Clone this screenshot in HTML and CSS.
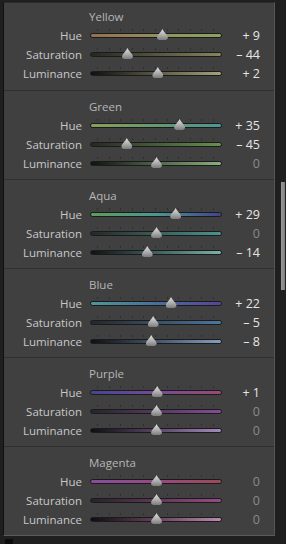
FILE: index.html
```html
<!DOCTYPE html>
<html lang="en">
<head>
    <meta charset="UTF-8">
    <meta name="viewport" content="width=device-width, initial-scale=1.0">
    <title>HSL - Color Mixer</title>
    <link rel="stylesheet" href="styles.css">
</head>
<body>
    <div class="frame">
        <div class="panel">

            <section class="band yellow">
                <div class="band-title">Yellow</div>
                <div class="row hue">
                    <span class="label">Hue</span>
                    <div class="slider"><div class="ticks"><i></i><i></i><i></i><i></i><i></i><i></i><i></i><i></i><i></i><i></i><i></i></div><div class="line"></div><div class="thumb" style="left: 54.5%"></div></div>
                    <span class="value">+ 9</span>
                </div>
                <div class="row sat">
                    <span class="label">Saturation</span>
                    <div class="slider"><div class="ticks"><i></i><i></i><i></i><i></i><i></i><i></i><i></i><i></i><i></i><i></i><i></i></div><div class="line"></div><div class="thumb" style="left: 28%"></div></div>
                    <span class="value">– 44</span>
                </div>
                <div class="row lum">
                    <span class="label">Luminance</span>
                    <div class="slider"><div class="ticks"><i></i><i></i><i></i><i></i><i></i><i></i><i></i><i></i><i></i><i></i><i></i></div><div class="line"></div><div class="thumb" style="left: 51%"></div></div>
                    <span class="value">+ 2</span>
                </div>
            </section>

            <section class="band green">
                <div class="band-title">Green</div>
                <div class="row hue">
                    <span class="label">Hue</span>
                    <div class="slider"><div class="ticks"><i></i><i></i><i></i><i></i><i></i><i></i><i></i><i></i><i></i><i></i><i></i></div><div class="line"></div><div class="thumb" style="left: 67.5%"></div></div>
                    <span class="value">+ 35</span>
                </div>
                <div class="row sat">
                    <span class="label">Saturation</span>
                    <div class="slider"><div class="ticks"><i></i><i></i><i></i><i></i><i></i><i></i><i></i><i></i><i></i><i></i><i></i></div><div class="line"></div><div class="thumb" style="left: 27.5%"></div></div>
                    <span class="value">– 45</span>
                </div>
                <div class="row lum">
                    <span class="label">Luminance</span>
                    <div class="slider"><div class="ticks"><i></i><i></i><i></i><i></i><i></i><i></i><i></i><i></i><i></i><i></i><i></i></div><div class="line"></div><div class="thumb" style="left: 50%"></div></div>
                    <span class="value zero">0</span>
                </div>
            </section>

            <section class="band aqua">
                <div class="band-title">Aqua</div>
                <div class="row hue">
                    <span class="label">Hue</span>
                    <div class="slider"><div class="ticks"><i></i><i></i><i></i><i></i><i></i><i></i><i></i><i></i><i></i><i></i><i></i></div><div class="line"></div><div class="thumb" style="left: 64.5%"></div></div>
                    <span class="value">+ 29</span>
                </div>
                <div class="row sat">
                    <span class="label">Saturation</span>
                    <div class="slider"><div class="ticks"><i></i><i></i><i></i><i></i><i></i><i></i><i></i><i></i><i></i><i></i><i></i></div><div class="line"></div><div class="thumb" style="left: 50%"></div></div>
                    <span class="value zero">0</span>
                </div>
                <div class="row lum">
                    <span class="label">Luminance</span>
                    <div class="slider"><div class="ticks"><i></i><i></i><i></i><i></i><i></i><i></i><i></i><i></i><i></i><i></i><i></i></div><div class="line"></div><div class="thumb" style="left: 43%"></div></div>
                    <span class="value">– 14</span>
                </div>
            </section>

            <section class="band blue">
                <div class="band-title">Blue</div>
                <div class="row hue">
                    <span class="label">Hue</span>
                    <div class="slider"><div class="ticks"><i></i><i></i><i></i><i></i><i></i><i></i><i></i><i></i><i></i><i></i><i></i></div><div class="line"></div><div class="thumb" style="left: 61%"></div></div>
                    <span class="value">+ 22</span>
                </div>
                <div class="row sat">
                    <span class="label">Saturation</span>
                    <div class="slider"><div class="ticks"><i></i><i></i><i></i><i></i><i></i><i></i><i></i><i></i><i></i><i></i><i></i></div><div class="line"></div><div class="thumb" style="left: 47.5%"></div></div>
                    <span class="value">– 5</span>
                </div>
                <div class="row lum">
                    <span class="label">Luminance</span>
                    <div class="slider"><div class="ticks"><i></i><i></i><i></i><i></i><i></i><i></i><i></i><i></i><i></i><i></i><i></i></div><div class="line"></div><div class="thumb" style="left: 46%"></div></div>
                    <span class="value">– 8</span>
                </div>
            </section>

            <section class="band purple">
                <div class="band-title">Purple</div>
                <div class="row hue">
                    <span class="label">Hue</span>
                    <div class="slider"><div class="ticks"><i></i><i></i><i></i><i></i><i></i><i></i><i></i><i></i><i></i><i></i><i></i></div><div class="line"></div><div class="thumb" style="left: 50.5%"></div></div>
                    <span class="value">+ 1</span>
                </div>
                <div class="row sat">
                    <span class="label">Saturation</span>
                    <div class="slider"><div class="ticks"><i></i><i></i><i></i><i></i><i></i><i></i><i></i><i></i><i></i><i></i><i></i></div><div class="line"></div><div class="thumb" style="left: 50%"></div></div>
                    <span class="value zero">0</span>
                </div>
                <div class="row lum">
                    <span class="label">Luminance</span>
                    <div class="slider"><div class="ticks"><i></i><i></i><i></i><i></i><i></i><i></i><i></i><i></i><i></i><i></i><i></i></div><div class="line"></div><div class="thumb" style="left: 50%"></div></div>
                    <span class="value zero">0</span>
                </div>
            </section>

            <section class="band magenta">
                <div class="band-title">Magenta</div>
                <div class="row hue">
                    <span class="label">Hue</span>
                    <div class="slider"><div class="ticks"><i></i><i></i><i></i><i></i><i></i><i></i><i></i><i></i><i></i><i></i><i></i></div><div class="line"></div><div class="thumb" style="left: 50%"></div></div>
                    <span class="value zero">0</span>
                </div>
                <div class="row sat">
                    <span class="label">Saturation</span>
                    <div class="slider"><div class="ticks"><i></i><i></i><i></i><i></i><i></i><i></i><i></i><i></i><i></i><i></i><i></i></div><div class="line"></div><div class="thumb" style="left: 50%"></div></div>
                    <span class="value zero">0</span>
                </div>
                <div class="row lum">
                    <span class="label">Luminance</span>
                    <div class="slider"><div class="ticks"><i></i><i></i><i></i><i></i><i></i><i></i><i></i><i></i><i></i><i></i><i></i></div><div class="line"></div><div class="thumb" style="left: 50%"></div></div>
                    <span class="value zero">0</span>
                </div>
            </section>

        </div>
        <div class="gutter">
            <div class="scroll-thumb"></div>
        </div>
    </div>
    <div class="foot"><span class="foot-mark"></span></div>
</body>
</html>
```

FILE: styles.css
```css
:root {
    --panel-bg: #404040;
    --outer-bg: #1f1f1f;
    --label: #c8c8c8;
    --title: #b6b6b6;
}

body {
    margin: 0;
    width: 286px;
    height: 544px;
    overflow: hidden;
    background: var(--outer-bg);
    font-family: 'Open Sans', 'Noto Sans', sans-serif;
}

.frame {
    display: flex;
    padding-top: 2px;
}

.panel {
    width: 272px;
    margin-left: 3px;
    box-sizing: border-box;
    background: var(--panel-bg);
    border: 1px solid #111;
    border-top-color: #2b2b2b;
    border-right-color: #565656;
    border-bottom-color: #5a5a5a;
}

.band {
    height: 89px;
    box-sizing: border-box;
    padding-top: 8px;
    border-top: 1px solid #2f2f2f;
}

.band:first-child {
    height: 87px;
    padding-top: 6px;
    border-top: none;
}

.band-title {
    height: 15px;
    line-height: 15px;
    margin: 0 0 2px 85px;
    font-size: 11.5px;
    color: var(--title);
}

.row {
    display: flex;
    height: 19px;
    align-items: flex-start;
}

.label {
    width: 78px;
    text-align: right;
    font-size: 11.5px;
    line-height: 19px;
    color: var(--label);
}

.slider {
    position: relative;
    width: 132px;
    height: 19px;
    margin-left: 8px;
}

.ticks {
    display: flex;
    justify-content: space-between;
    height: 2px;
    margin: 3px 8px 0 7px;
}

.ticks i {
    width: 1px;
    background: #2e2e2e;
}

.line {
    height: 5px;
    margin-top: 2px;
    box-sizing: border-box;
    border: 1px solid #1b1b1b;
    border-radius: 3px;
}

.thumb {
    position: absolute;
    top: 3px;
    width: 11px;
    height: 11px;
    margin-left: -5px;
    background: linear-gradient(#e2e2e2, #a8a8a8 60%, #7c7c7c);
    clip-path: polygon(50% 0, 62% 20%, 90% 55%, 100% 75%, 95% 92%, 80% 100%, 20% 100%, 5% 92%, 0 75%, 10% 55%, 38% 20%);
}

.value {
    width: 38px;
    text-align: right;
    font-size: 12.5px;
    line-height: 19px;
    color: #e6e6e6;
    white-space: pre;
}

.value.zero {
    color: #8a8a8a;
}

/* track colours */
.yellow .hue .line { background: linear-gradient(90deg, #94704e, #929260 55%, #8ca260); }
.yellow .sat .line { background: linear-gradient(90deg, #262622, #86845e); }
.yellow .lum .line { background: linear-gradient(90deg, #101010, #5a5842 50%, #a6a27c); }

.green .hue .line { background: linear-gradient(90deg, #88a056, #5e9874 60%, #4e9694); }
.green .sat .line { background: linear-gradient(90deg, #262824, #64924e); }
.green .lum .line { background: linear-gradient(90deg, #101210, #4c6646 50%, #8aae80); }

.aqua .hue .line { background: linear-gradient(90deg, #5e9c5a, #4a9892 50%, #42428e); }
.aqua .sat .line { background: linear-gradient(90deg, #262828, #4a948c); }
.aqua .lum .line { background: linear-gradient(90deg, #101212, #3e605c 50%, #7cafa8); }

.blue .hue .line { background: linear-gradient(90deg, #4a9896, #4a6a9c 55%, #56449a); }
.blue .sat .line { background: linear-gradient(90deg, #26262a, #4c769e); }
.blue .lum .line { background: linear-gradient(90deg, #101012, #44546a 50%, #849ebc); }

.purple .hue .line { background: linear-gradient(90deg, #444592, #764a96 50%, #984a72); }
.purple .sat .line { background: linear-gradient(90deg, #262628, #844c96); }
.purple .lum .line { background: linear-gradient(90deg, #101010, #584466 50%, #a48abc); }

.magenta .hue .line { background: linear-gradient(90deg, #864c9c, #964a82 50%, #9c4a58); }
.magenta .sat .line { background: linear-gradient(90deg, #262426, #984a88); }
.magenta .lum .line { background: linear-gradient(90deg, #100e10, #66405c 50%, #bc8aae); }

.gutter {
    flex: 1;
}

.scroll-thumb {
    width: 4px;
    height: 108px;
    margin: 180px 0 0 6px;
    background: linear-gradient(90deg, #9a9a9a, #7e7e7e);
}

.foot {
    padding: 3px 0 0 5px;
}

.foot-mark {
    display: block;
    width: 8px;
    height: 6px;
    background: #0c0c0c;
}
```
